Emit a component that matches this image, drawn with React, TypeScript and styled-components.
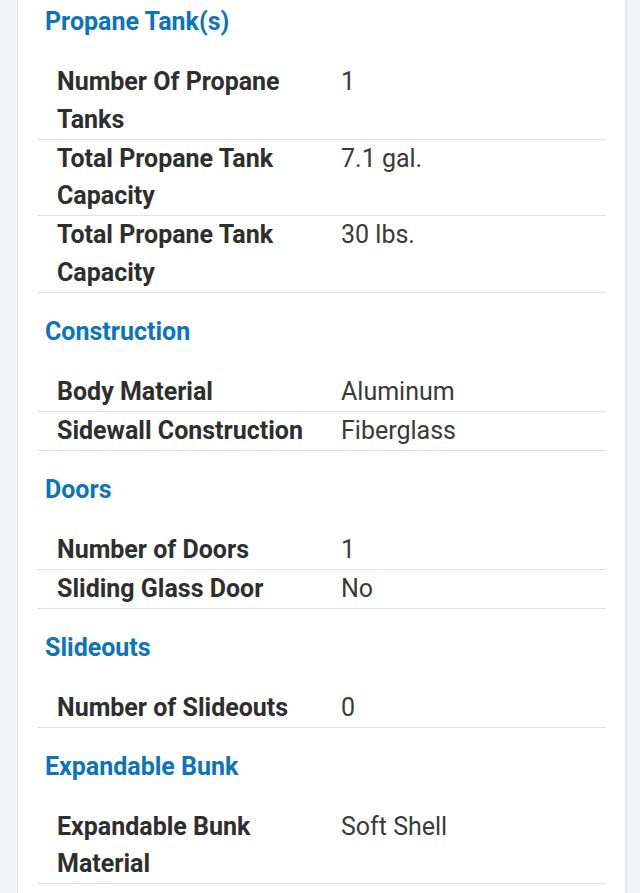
import React from "react";
import styled, { createGlobalStyle } from "styled-components";

const GlobalStyle = createGlobalStyle`
  html, body {
    margin: 0;
    padding: 0;
    background: #f3f4f5;
    font-family: Roboto, "Liberation Sans", Arial, sans-serif;
  }
`;

const Page = styled.div`
  display: flex;
  padding: 0 13px 0 17px;
  min-height: 893px;
  box-sizing: border-box;
`;

const Card = styled.main`
  flex: 1;
  background: #ffffff;
  border-left: 1px solid #e4e6e8;
  border-right: 2px solid #e8eaec;
  padding: 0 19px 0 20px;
  display: flex;
  flex-direction: column;
`;

const Section = styled.section`
  display: flex;
  flex-direction: column;
`;

const Heading = styled.h2<{ $first?: boolean }>`
  margin: ${(p) => (p.$first ? "7px" : "24px")} 0 26px 7px;
  font-size: 25px;
  line-height: 30px;
  font-weight: 700;
  color: #0a74bc;
`;

const Row = styled.div`
  display: grid;
  grid-template-columns: 1fr 1fr;
  align-items: center;
  box-sizing: border-box;
  min-height: 39px;
  border-bottom: 1px solid #e2e2e2;
`;

const Label = styled.div`
  padding: 0 19px;
  font-size: 25px;
  line-height: 37.75px;
  font-weight: 700;
  color: #2e2e2e;
`;

const Value = styled.div`
  align-self: start;
  padding: 0 19px;
  font-size: 25px;
  line-height: 37.75px;
  font-weight: 400;
  color: #3a3a3a;
`;

type Spec = { label: string; value: string };
type Group = { title: string; rows: Spec[] };

const groups: Group[] = [
  {
    title: "Propane Tank(s)",
    rows: [
      { label: "Number Of Propane Tanks", value: "1" },
      { label: "Total Propane Tank Capacity", value: "7.1 gal." },
      { label: "Total Propane Tank Capacity", value: "30 lbs." },
    ],
  },
  {
    title: "Construction",
    rows: [
      { label: "Body Material", value: "Aluminum" },
      { label: "Sidewall Construction", value: "Fiberglass" },
    ],
  },
  {
    title: "Doors",
    rows: [
      { label: "Number of Doors", value: "1" },
      { label: "Sliding Glass Door", value: "No" },
    ],
  },
  {
    title: "Slideouts",
    rows: [{ label: "Number of Slideouts", value: "0" }],
  },
  {
    title: "Expandable Bunk",
    rows: [{ label: "Expandable Bunk Material", value: "Soft Shell" }],
  },
];

export default function App() {
  return (
    <>
      <GlobalStyle />
      <Page>
        <Card>
          {groups.map((g, i) => (
            <Section key={g.title}>
              <Heading $first={i === 0}>{g.title}</Heading>
              {g.rows.map((r, j) => (
                <Row key={j}>
                  <Label>{r.label}</Label>
                  <Value>{r.value}</Value>
                </Row>
              ))}
            </Section>
          ))}
        </Card>
      </Page>
    </>
  );
}
